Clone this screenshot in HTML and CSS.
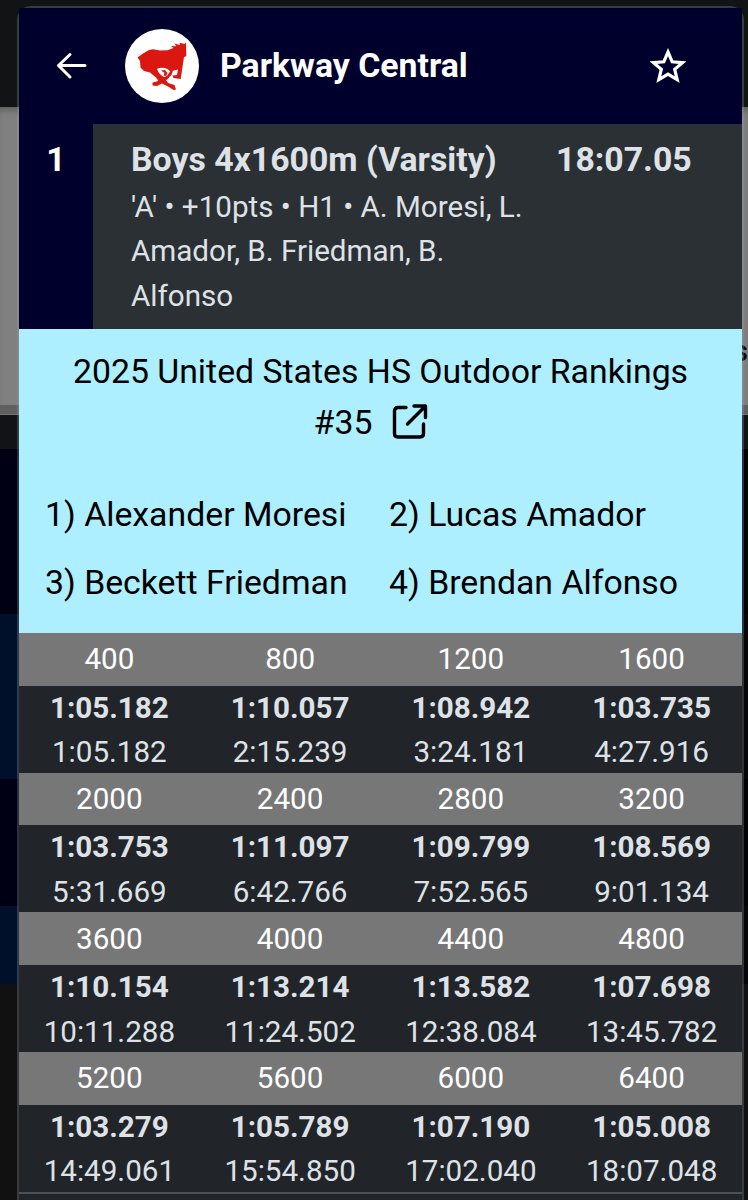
FILE: index.html
```html
<!DOCTYPE html>
<html lang="en">
<head>
    <meta charset="UTF-8">
    <meta name="viewport" content="width=device-width, initial-scale=1.0">
    <title>Parkway Central</title>
    <link rel="stylesheet" href="styles.css">
</head>
<body>
    <div class="page">
        <div class="page-nav"></div>
        <div class="page-head">s</div>
        <div class="page-line"></div>
        <div class="page-gap"></div>
        <div class="page-row first"></div>
        <div class="page-row alt"></div>
        <div class="page-row third"></div>
        <div class="page-row alt last"></div>
    </div>

    <div class="modal">
        <div class="header">
            <svg class="back" viewBox="0 0 32 28">
                <path d="M29 13.500H2.500M14 2.500L2.500 13.500L14 25"/>
            </svg>
            <svg class="logo" viewBox="0 0 74 74">
                <circle cx="37" cy="37" r="37" fill="#fff"/>
                <path fill="#da1710" d="M12.500 28.500L18 24.500L24 21L28 20.300L35 21.500L42.500 21.300L48.500 19L46 17L51.500 17.300L49.300 14.500L55 16L54.500 13.800L59.500 15L61 13.500L61.300 27.300L59 28L57.500 38L55.700 50L48.500 49L47.500 46.500L52 46L53 40.500L47 42L46.500 46L41 51.500L43 54L49.500 56L51 60.500L48.500 61L43 57.500L37 54.500L32 57L27.500 56.500L27.500 53.500L33.500 52L31 48.500L25 43.500L19 42L15.500 38.500L15 32Z"/>
                <path fill="#fff" d="M32 40Q36 37.500 42.500 40L46 43L44.500 47.500L40 48.500Q34 46 32 40Z"/>
                <path fill="#da1710" d="M36 41.500L40 41L42.500 44L41 47L38.500 46.500L39.500 44Z"/>
                <path fill="none" stroke="#da1710" stroke-width="2.500" d="M47 42L43 47.500L33 53M33 48L42 54"/>
            </svg>
            <h1>Parkway Central</h1>
            <svg class="star" viewBox="0 0 36 36">
                <path d="M18 4L22.200 13.800L32.500 14.600L24.700 21.300L27.200 31.700L18 26.200L8.800 31.700L11.300 21.300L3.500 14.600L13.800 13.800Z"/>
            </svg>
        </div>

        <div class="result">
            <div class="place">1</div>
            <div class="event">
                <h2>Boys 4x1600m (Varsity)</h2>
                <p>'A' • +10pts • H1 • A. Moresi, L. Amador, B. Friedman, B. Alfonso</p>
            </div>
            <div class="time">18:07.05</div>
        </div>

        <div class="ranking">
            <div class="rank-title">2025 United States HS Outdoor Rankings</div>
            <div class="rank-number">
                <span>#35</span>
                <svg class="link" viewBox="0 0 36 36">
                    <path d="M14 3.500H6Q2.500 3.500 2.500 7V29.500Q2.500 33 6 33H28Q31.500 33 31.500 29.500V20M22 2H33.500V13.500M33 2.500L15.500 20"/>
                </svg>
            </div>
            <div class="runners">
                <span>1) Alexander Moresi</span>
                <span>2) Lucas Amador</span>
                <span>3) Beckett Friedman</span>
                <span>4) Brendan Alfonso</span>
            </div>
        </div>

        <table>
            <tr class="dist"><th>400</th><th>800</th><th>1200</th><th>1600</th></tr>
            <tr class="split">
                <td><b>1:05.182</b>1:05.182</td>
                <td><b>1:10.057</b>2:15.239</td>
                <td><b>1:08.942</b>3:24.181</td>
                <td><b>1:03.735</b>4:27.916</td>
            </tr>
            <tr class="dist"><th>2000</th><th>2400</th><th>2800</th><th>3200</th></tr>
            <tr class="split">
                <td><b>1:03.753</b>5:31.669</td>
                <td><b>1:11.097</b>6:42.766</td>
                <td><b>1:09.799</b>7:52.565</td>
                <td><b>1:08.569</b>9:01.134</td>
            </tr>
            <tr class="dist"><th>3600</th><th>4000</th><th>4400</th><th>4800</th></tr>
            <tr class="split">
                <td><b>1:10.154</b>10:11.288</td>
                <td><b>1:13.214</b>11:24.502</td>
                <td><b>1:13.582</b>12:38.084</td>
                <td><b>1:07.698</b>13:45.782</td>
            </tr>
            <tr class="dist"><th>5200</th><th>5600</th><th>6000</th><th>6400</th></tr>
            <tr class="split">
                <td><b>1:03.279</b>14:49.061</td>
                <td><b>1:05.789</b>15:54.850</td>
                <td><b>1:07.190</b>17:02.040</td>
                <td><b>1:05.008</b>18:07.048</td>
            </tr>
        </table>
        <div class="footer"></div>
    </div>
</body>
</html>
```
FILE: styles.css
```css
* {
    box-sizing: border-box;
}
body {
    font-family: Roboto, sans-serif;
    font-size: 29.6px;
    line-height: 44px;
    margin: 0;
    height: 1200px;
    overflow: hidden;
    position: relative;
    background-color: #111;
}
h1, h2, p {
    margin: 0;
}
.page-nav {
    height: 107px;
    background-color: #111314;
}
.page-head {
    height: 298px;
    padding-top: 222px;
    text-align: right;
    font-weight: 500;
    color: #080808;
    background-color: #808080;
    box-shadow: inset 0 7px 7px -4px #5c5c5c;
}
.page-line {
    height: 10px;
    background-color: #606060;
    border-bottom: 1px solid #777;
}
.page-gap { height: 34px; background-color: #111314; }
.page-row { background: linear-gradient(to right, #000014 50%, #020304 50%); }
.page-row.alt { background: linear-gradient(to right, #00102a 50%, #050607 50%); }
.first { height: 165px; }
.alt { height: 165px; }
.third { height: 127px; }
.last { height: 78px; }

/* the modal lies over the dimmed page */
.modal {
    position: absolute;
    top: 6px;
    left: 17px;
    width: 727px;
    height: 1220px;
    border: 2px solid rgba(150, 155, 165, 0.3);
    border-radius: 14px;
    background-clip: padding-box;
}
.header {
    display: flex;
    align-items: center;
    height: 116px;
    padding: 0 56px 0 37px;
    background-color: #00002c;
    color: white;
}
.header h1 {
    flex: 1;
    font-size: 33.8px;
    font-weight: 700;
}
.back {
    width: 32px;
    height: 28px;
    margin-right: 37px;
    fill: none;
    stroke: white;
    stroke-width: 3;
    stroke-linecap: round;
    stroke-linejoin: round;
}
.logo {
    width: 74px;
    height: 74px;
    margin-right: 21px;
}
.star {
    width: 36px;
    height: 36px;
    fill: none;
    stroke: white;
    stroke-width: 3.2;
}
.result {
    display: flex;
    height: 205px;
    background-color: #2b3035;
    color: #dee2e6;
}
.place {
    width: 74px;
    padding-top: 14px;
    text-align: center;
    font-size: 33.8px;
    font-weight: 700;
    color: white;
    background-color: #00002c;
}
.event {
    width: 450px;
    padding: 14px 0 0 38px;
}
.event h2 {
    font-size: 33.8px;
    font-weight: 700;
    line-height: 44px;
    white-space: nowrap;
}
.event p {
    line-height: 44.3px;
    padding: 3px 0 0;
}
.time {
    padding-top: 14px;
    margin-left: 13px;
    font-size: 33.8px;
    font-weight: 700;
}
.ranking {
    height: 304px;
    padding-top: 17px;
    font-size: 33.8px;
    line-height: 51px;
    color: #000;
    background-color: #adefff;
}
.rank-title {
    text-align: center;
    white-space: nowrap;
}
.rank-number {
    display: flex;
    justify-content: center;
    align-items: center;
    gap: 20px;
    height: 50px;
    padding-right: 19px;
}
.link {
    width: 36px;
    height: 36px;
    margin-bottom: 1px;
    fill: none;
    stroke: #000;
    stroke-width: 3.4;
    stroke-linecap: round;
    stroke-linejoin: round;
}
.runners {
    display: grid;
    grid-template-columns: 344px 1fr;
    row-gap: 17px;
    padding: 42px 0 0 26px;
    white-space: nowrap;
}
table {
    width: 100%;
    table-layout: fixed;
    border-collapse: collapse;
    text-align: center;
}
th, td {
    padding: 0;
}
.dist {
    height: 52.7px;
    color: white;
    background-color: #777;
}
.dist th {
    font-weight: 400;
}
.split {
    height: 87px;
    color: #dee2e6;
    background-color: #212529;
}
.split td {
    line-height: 39.5px;
}
.split b {
    display: block;
    line-height: 45.5px;
    padding-bottom: 2px;
}
.footer {
    height: 40px;
    border-top: 2px solid #495057;
    background-color: #212529;
}
```
